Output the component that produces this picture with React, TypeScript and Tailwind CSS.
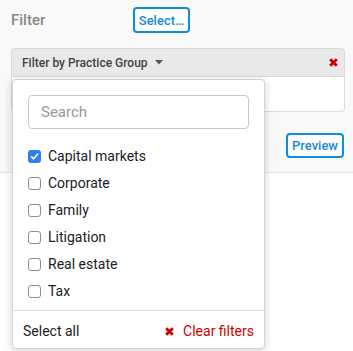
import React from "react";

const items = [
  { label: "Capital markets", checked: true },
  { label: "Corporate", checked: false },
  { label: "Family", checked: false },
  { label: "Litigation", checked: false },
  { label: "Real estate", checked: false },
  { label: "Tax", checked: false },
];

function RedX({ size = 8 }: { size?: number }) {
  return (
    <svg width={size} height={size} viewBox="0 0 9 9" className="block">
      <path d="M1.2 1.2 L7.8 7.8 M7.8 1.2 L1.2 7.8" stroke="#cc0000" strokeWidth="2.8" strokeLinecap="butt" />
    </svg>
  );
}

function Box({ checked }: { checked: boolean }) {
  if (checked) {
    return (
      <span className="w-[13px] h-[13px] rounded-[3px] bg-[#2f7ff0] flex items-center justify-center shrink-0">
        <svg width="9" height="9" viewBox="0 0 9 9">
          <path d="M1.5 4.8 L3.6 6.8 L7.5 2.2" stroke="#fff" strokeWidth="1.6" fill="none" strokeLinecap="round" strokeLinejoin="round" />
        </svg>
      </span>
    );
  }
  return <span className="w-[13px] h-[13px] rounded-[3px] border border-[#8e8e8e] bg-white shrink-0 box-border" />;
}

export default function App() {
  return (
    <div
      className="relative w-[353px] h-[351px] overflow-hidden bg-white"
      style={{ fontFamily: "Roboto, 'Liberation Sans', sans-serif" }}
    >
      <div className="bg-[#f9f9f9] border-b border-[#e3e3e3] h-[173px] flex flex-col">
        <div className="flex items-center h-[26px] mt-[7px]">
          <span className="ml-[11px] w-[122px] text-[15px] font-medium text-[#888] leading-none">Filter</span>
          <button className="h-[26px] w-[57px] border-2 border-[#0d8ddb] rounded-[4px] bg-white text-[13px] font-medium text-[#1a8ad4] leading-none flex items-center justify-center">
            Select…
          </button>
        </div>
        <div className="mt-[15px] ml-[11px] mr-[8px]">
          <div className="h-[29px] bg-[#e9e9e9] border border-[#dadada] rounded-t-[4px] flex items-center pl-[10px] pr-[6px]">
            <span className="text-[12px] font-medium text-[#444]">Filter by Practice Group</span>
            <svg width="8" height="5" viewBox="0 0 8 5" className="ml-[7px]">
              <path d="M0 0 L8 0 L4 4.5 Z" fill="#555" />
            </svg>
            <span className="ml-auto">
              <RedX size={9} />
            </span>
          </div>
          <div className="h-[35px] bg-white border border-t-0 border-[#dedede] rounded-b-[4px]" />
        </div>
        <div className="flex justify-end mt-[21px] mr-[9px]">
          <button className="h-[25px] w-[58px] border-2 border-[#0d8ddb] rounded-[4px] bg-white text-[13px] font-medium text-[#1a8ad4] leading-none flex items-center justify-center">
            Preview
          </button>
        </div>
      </div>

      <div className="absolute left-[12px] top-[79px] w-[253px] h-[270px] bg-white rounded-[4px] border border-[#d4d4d4] shadow-[0_2px_10px_rgba(0,0,0,0.18)] flex flex-col">
        <div className="px-[15px] pt-[15px]">
          <div className="h-[34px] w-[221px] border border-[#c8c8c8] rounded-[4px] flex items-center px-[12px]">
            <span className="text-[15px] text-[#999]">Search</span>
          </div>
        </div>
        <div className="mt-[14px] px-[15px] flex flex-col">
          {items.map((it) => (
            <div key={it.label} className="h-[27px] flex items-center gap-[7px]">
              <Box checked={it.checked} />
              <span className="text-[14px] text-[#222]">{it.label}</span>
            </div>
          ))}
        </div>
        <div className="mt-[5px] border-t border-[#dcdcdc] flex-1 flex items-center justify-between px-[10px] pt-[3px]">
          <span className="text-[14px] text-[#222]">Select all</span>
          <span className="flex items-center gap-[9px]">
            <RedX size={9} />
            <span className="text-[14px] text-[#cc0000]">Clear filters</span>
          </span>
        </div>
      </div>
    </div>
  );
}
